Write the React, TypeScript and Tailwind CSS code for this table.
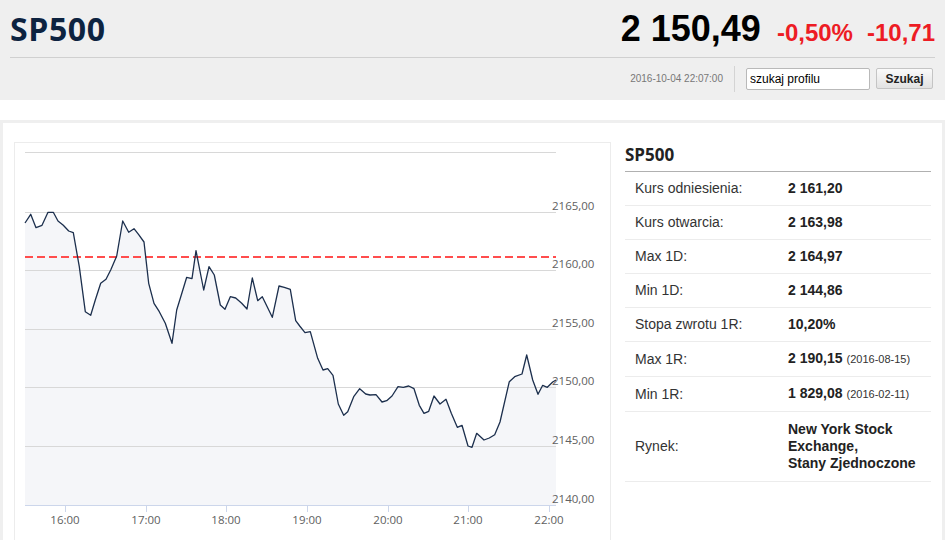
import React from 'react';

// kurs intraday, wsp. w pikselach strony (x: czas, y: wartość)
const points: [number, number][] = [
    [25, 223], [30.7, 214.3], [36, 227.7], [42, 225.3], [48, 212.3], [53.3, 212.3], [58, 221], [63.3, 225.3],
    [68.7, 231], [73.3, 232.7], [79.3, 266.7], [85.3, 311.7], [90.7, 315.3], [95.3, 300], [100.7, 283.3],
    [106, 279.3], [110.7, 270], [116.7, 256], [122.7, 221], [128.7, 232.3], [134, 228.7], [138.7, 234.7],
    [144, 242], [148.7, 283.3], [154, 303.3], [159.3, 311.7], [165.3, 323.3], [172, 343.3], [176.7, 310],
    [181.3, 295], [186.7, 277.3], [192, 278.7], [196, 250.7], [203.7, 290], [209, 266.7], [214.3, 275],
    [220.3, 305], [225, 309.3], [230.3, 296.7], [235.7, 298], [241.7, 303.3], [247, 309], [252.3, 278],
    [257.7, 300.7], [262.3, 296.7], [272.3, 317.3], [279, 286], [284.3, 287.3], [290.3, 289.3], [295.7, 320.7],
    [299.7, 326], [305, 332.7], [310.3, 331.7], [317.7, 358.3], [323, 370], [327.7, 368.7], [333, 375.3],
    [338.3, 404], [343.7, 415.3], [347.7, 411.7], [353.7, 396.7], [359.7, 388.7], [365.7, 394], [370, 395],
    [376, 394.7], [382, 402], [386.7, 400.7], [392, 396], [398, 386.7], [403.3, 387.3], [408.7, 386],
    [414, 388.7], [419.3, 405.3], [424, 413.3], [428.7, 411.3], [434, 396], [440, 404], [446, 399.3],
    [451.3, 413.3], [457.3, 427.3], [462, 425.3], [468, 446], [472, 447.3], [476.7, 433.3], [484, 440],
    [489.3, 438], [494.7, 434.7], [500, 422], [509.3, 381.7], [514.7, 376.7], [522, 374], [526.7, 355],
    [532.7, 380], [538, 394.3], [542.7, 385.3], [547.3, 387.3], [552.7, 382], [556, 380]
];

const yLevels = [
    { y: 212.5, label: '2165,00' },
    { y: 270.5, label: '2160,00' },
    { y: 329.5, label: '2155,00' },
    { y: 387.5, label: '2150,00' },
    { y: 446.5, label: '2145,00' },
    { y: 505.5, label: '2140,00' }
];

const xTicks = [
    { x: 65, label: '16:00' },
    { x: 146, label: '17:00' },
    { x: 226, label: '18:00' },
    { x: 307, label: '19:00' },
    { x: 388, label: '20:00' },
    { x: 468, label: '21:00' },
    { x: 549, label: '22:00' }
];

const stats = [
    { label: 'Kurs odniesienia:', value: '2 161,20' },
    { label: 'Kurs otwarcia:', value: '2 163,98' },
    { label: 'Max 1D:', value: '2 164,97' },
    { label: 'Min 1D:', value: '2 144,86' },
    { label: 'Stopa zwrotu 1R:', value: '10,20%' },
    { label: 'Max 1R:', value: '2 190,15', date: '(2016-08-15)' },
    { label: 'Min 1R:', value: '1 829,08', date: '(2016-02-11)' }
];

function Chart() {
    const line = points.map(([x, y], i) => `${i ? 'L' : 'M'}${x} ${y}`).join(' ');
    const area = `${line} L556 505 L25 505 Z`;

    return (
        <svg width="595" height="410" viewBox="15 143 595 410" className="block" style={{ fontFamily: '"Open Sans", sans-serif' }}>
            <path d={area} fill="#f5f6f9" />
            <line x1="25" x2="556" y1="152.5" y2="152.5" stroke="#d8d8d8" />
            {yLevels.slice(0, 5).map((l) => (
                <line key={l.y} x1="25" x2="556" y1={l.y} y2={l.y} stroke="#d8d8d8" />
            ))}
            <line x1="25" x2="556" y1="505.5" y2="505.5" stroke="#ccd6eb" />
            {xTicks.map((t) => (
                <line key={t.x} x1={t.x + 0.5} x2={t.x + 0.5} y1="505" y2="512" stroke="#ccd6eb" />
            ))}
            <line x1="25" x2="556" y1="257" y2="257" stroke="#ff4d4d" strokeWidth="2" strokeDasharray="8 4" />
            <path d={line} fill="none" stroke="#1c2f4d" strokeWidth="1.3" strokeLinejoin="round" />
            {yLevels.map((l) => (
                <text key={l.label} x="552" y={l.y - 3} fontSize="11.5" fill="#606060">{l.label}</text>
            ))}
            {xTicks.map((t) => (
                <text key={t.label} x={t.x} y="524" fontSize="11.5" fill="#606060" textAnchor="middle">{t.label}</text>
            ))}
        </svg>
    );
}

export default function App() {
    return (
        <div className="w-[945px] bg-white" style={{ fontFamily: '"Liberation Sans", Arial, sans-serif' }}>
            {/* nagłówek */}
            <div className="h-[100px] bg-[#efefef] px-[10px]">
                <div className="h-[58px] flex items-center justify-between border-b border-[#d0d0d0]">
                    <h1 className="text-[32px] font-bold text-[#0d2340] tracking-[0.6px] leading-none" style={{ fontFamily: '"Open Sans", sans-serif' }}>
                        SP500
                    </h1>
                    <div className="flex items-baseline">
                        <span className="text-[36px] font-bold text-black leading-none">2 150,49</span>
                        <span className="ml-[16px] text-[24px] font-bold text-[#ed1c24] leading-none">-0,50%</span>
                        <span className="ml-[14px] text-[24px] font-bold text-[#ed1c24] leading-none">-10,71</span>
                    </div>
                </div>
                <div className="h-[41px] flex items-center justify-end">
                    <span className="text-[10px] text-[#777]">2016-10-04 22:07:00</span>
                    <div className="ml-[11px] mr-[11px] w-px h-[26px] bg-[#d4d4d4]" />
                    <input
                        defaultValue="szukaj profilu"
                        className="w-[124px] h-[22px] px-[3px] text-[12px] text-black bg-white border border-[#b9b9b9] rounded-[2px] outline-none"
                    />
                    <button className="ml-[6px] mr-[2px] w-[57px] h-[21px] text-[12px] font-bold text-[#222] border border-[#c4c4c4] rounded-[2px] bg-gradient-to-b from-[#fafafa] to-[#e2e2e2]">
                        Szukaj
                    </button>
                </div>
            </div>

            {/* treść */}
            <div className="mt-5 border-[3px] border-[#efefef] flex px-[11px] pt-[19px] pb-6">
                <div className="w-[597px] border border-[#ececec]">
                    <Chart />
                </div>
                <div className="ml-[14px] w-[306px]">
                    <div className="pt-[1px] pb-[4px] leading-6 text-[17px] font-bold text-[#222] border-b border-[#b0b0b0]" style={{ fontFamily: '"Open Sans", sans-serif' }}>
                        SP500
                    </div>
                    {stats.map((s) => (
                        <div key={s.label} className="flex items-center py-[7px] leading-[19px] text-[14px] border-b border-[#ececec]">
                            <div className="w-[163px] pl-[10px] text-[#333]">{s.label}</div>
                            <div className="font-bold text-[#222]">
                                {s.value}
                                {s.date && <span className="ml-1 font-normal text-[11px] text-[#333]">{s.date}</span>}
                            </div>
                        </div>
                    ))}
                    <div className="flex items-center py-[9px] text-[14px] border-b border-[#ececec]">
                        <div className="w-[163px] pl-[10px] text-[#333]">Rynek:</div>
                        <div className="font-bold text-[#222] leading-[17px]">
                            New York Stock
                            <br />
                            Exchange,
                            <br />
                            Stany Zjednoczone
                        </div>
                    </div>
                </div>
            </div>
        </div>
    );
}
